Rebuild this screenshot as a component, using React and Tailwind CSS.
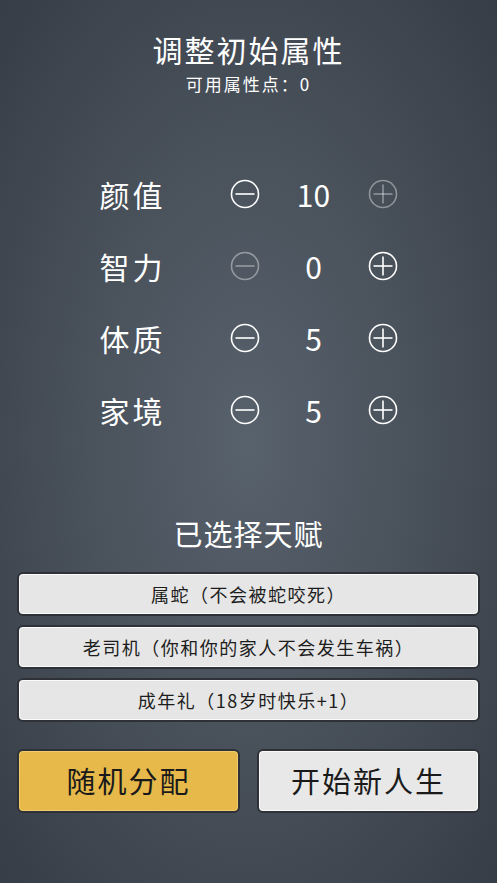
import React, { useState } from "react";

const font = { fontFamily: '"Noto Sans CJK SC", "Noto Sans", sans-serif' };

function CircleIcon({ plus, disabled, onClick }) {
  return (
    <button
      type="button"
      onClick={onClick}
      className={`w-[30px] h-[30px] flex items-center justify-center ${
        disabled ? "text-white/40" : "text-white"
      }`}
    >
      <svg viewBox="0 0 30 30" className="w-[30px] h-[30px]" fill="none" stroke="currentColor" strokeWidth="1.6">
        <circle cx="15" cy="15" r="13.5" />
        <line x1="5.5" y1="15" x2="24.5" y2="15" />
        {plus && <line x1="15" y1="5.5" x2="15" y2="24.5" />}
      </svg>
    </button>
  );
}

export default function App() {
  const [stats, setStats] = useState([
    { name: "颜值", value: 10 },
    { name: "智力", value: 0 },
    { name: "体质", value: 5 },
    { name: "家境", value: 5 },
  ]);
  const points = 0;

  const talents = [
    "属蛇（不会被蛇咬死）",
    "老司机（你和你的家人不会发生车祸）",
    "成年礼（18岁时快乐+1）",
  ];

  return (
    <div
      style={font}
      className="w-full min-h-[883px] text-white bg-[radial-gradient(ellipse_at_50%_50%,#58626c_0%,#4a525c_45%,#363d47_100%)] flex flex-col items-center"
    >
      <h1 className="mt-[33px] text-[30px] leading-[32px] tracking-[2px]">调整初始属性</h1>
      <div className="mt-[9px] text-[17px] leading-[20px] tracking-[2px]">可用属性点：{points}</div>

      <div className="mt-[82px] flex flex-col gap-[36px]">
        {stats.map((s, i) => (
          <div key={s.name} className="flex items-center h-[36px]">
            <div className="w-[130px] text-[30px] leading-[36px] tracking-[3px]">{s.name}</div>
            <CircleIcon
              disabled={s.value <= 0}
              onClick={() =>
                setStats((prev) => prev.map((p, j) => (j === i && p.value > 0 ? { ...p, value: p.value - 1 } : p)))
              }
            />
            <div className="w-[108px] text-center text-[30px] leading-[36px]">{s.value}</div>
            <CircleIcon plus disabled={i === 0} />
          </div>
        ))}
      </div>

      <h2 className="mt-[86px] text-[29px] leading-[38px] tracking-[1px]">已选择天赋</h2>

      <div className="mt-[20px] w-full px-[17px] flex flex-col gap-[9px]">
        {talents.map((t) => (
          <div
            key={t}
            className="h-[44px] rounded-[6px] border-2 border-[#2e3238] bg-[#e6e6e6] shadow-[inset_0_0_0_1px_#fafafa] flex items-center justify-center text-[#1d1d1d] text-[18px] tracking-[1.5px]"
          >
            {t}
          </div>
        ))}
      </div>

      <div className="mt-[27px] w-full px-[17px] flex gap-[17px]">
        <button
          type="button"
          className="flex-1 h-[64px] rounded-[6px] border-2 border-[#2e3238] bg-[#e6b94a] shadow-[inset_0_0_0_1px_#f0cc6a] text-[#1a1a1a] text-[29px] tracking-[2px]"
        >
          随机分配
        </button>
        <button
          type="button"
          className="flex-1 h-[64px] rounded-[6px] border-2 border-[#2e3238] bg-[#e8e8e8] shadow-[inset_0_0_0_1px_#fafafa] text-[#1a1a1a] text-[29px] tracking-[2px]"
        >
          开始新人生
        </button>
      </div>
    </div>
  );
}
